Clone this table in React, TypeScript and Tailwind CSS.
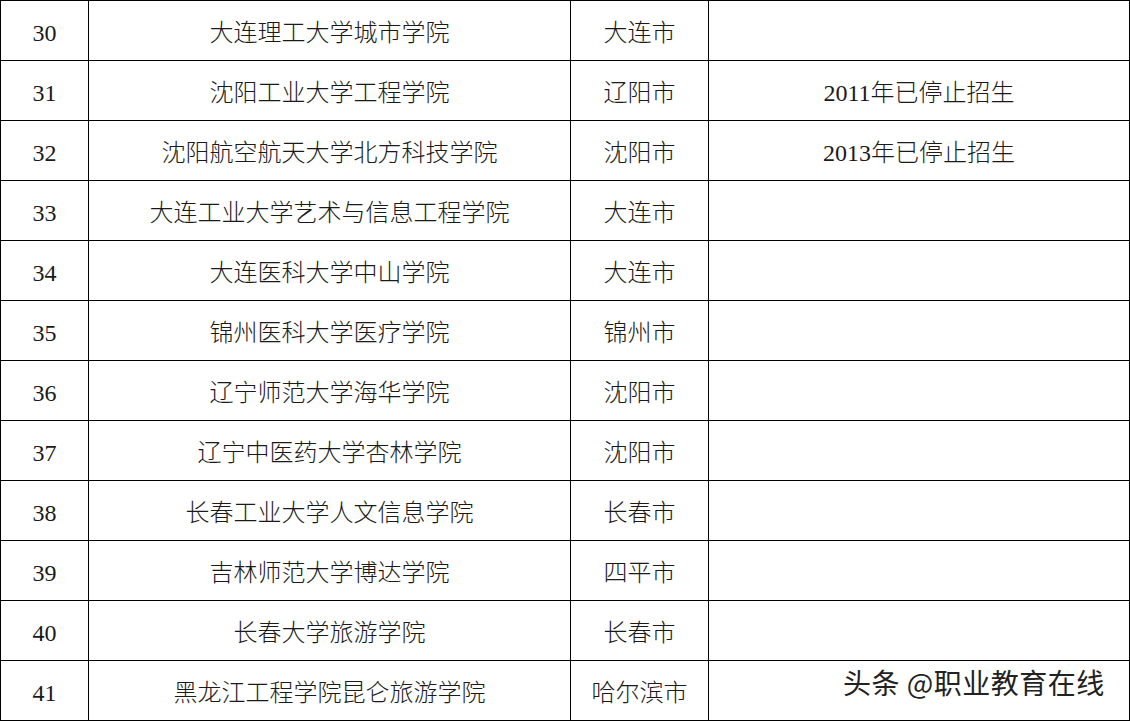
import React from "react";

const rows: [string, string, string, string][] = [
  ["30", "大连理工大学城市学院", "大连市", ""],
  ["31", "沈阳工业大学工程学院", "辽阳市", "2011年已停止招生"],
  ["32", "沈阳航空航天大学北方科技学院", "沈阳市", "2013年已停止招生"],
  ["33", "大连工业大学艺术与信息工程学院", "大连市", ""],
  ["34", "大连医科大学中山学院", "大连市", ""],
  ["35", "锦州医科大学医疗学院", "锦州市", ""],
  ["36", "辽宁师范大学海华学院", "沈阳市", ""],
  ["37", "辽宁中医药大学杏林学院", "沈阳市", ""],
  ["38", "长春工业大学人文信息学院", "长春市", ""],
  ["39", "吉林师范大学博达学院", "四平市", ""],
  ["40", "长春大学旅游学院", "长春市", ""],
  ["41", "黑龙江工程学院昆仑旅游学院", "哈尔滨市", ""],
];

export default function App() {
  return (
    <div
      className="relative w-[1130px] h-[721px] bg-white overflow-hidden text-[#1a1a1a]"
      style={{ fontFamily: '"Liberation Serif", "Noto Sans CJK SC", serif' }}
    >
      <div className="grid grid-cols-[89px_482px_138px_421px] border-t border-black">
        {rows.map((r, i) => (
          <React.Fragment key={i}>
            {r.map((c, j) => (
              <div
                key={j}
                className={`h-[60px] flex items-center justify-center pt-[4px] text-[24px] font-light leading-none border-b border-r border-black ${
                  j === 0 ? "border-l" : ""
                }`}
              >
                {c}
              </div>
            ))}
          </React.Fragment>
        ))}
      </div>
      <div
        className="absolute left-[843px] top-[668px] text-[28px] tracking-[0.5px] leading-none text-[#222] whitespace-nowrap"
        style={{
          fontFamily: '"Noto Sans CJK SC", sans-serif',
          textShadow: "1px 1px 0 #fff, -1px -1px 0 #fff, 1px -1px 0 #fff, -1px 1px 0 #fff",
        }}
      >
        头条 @职业教育在线
      </div>
    </div>
  );
}
